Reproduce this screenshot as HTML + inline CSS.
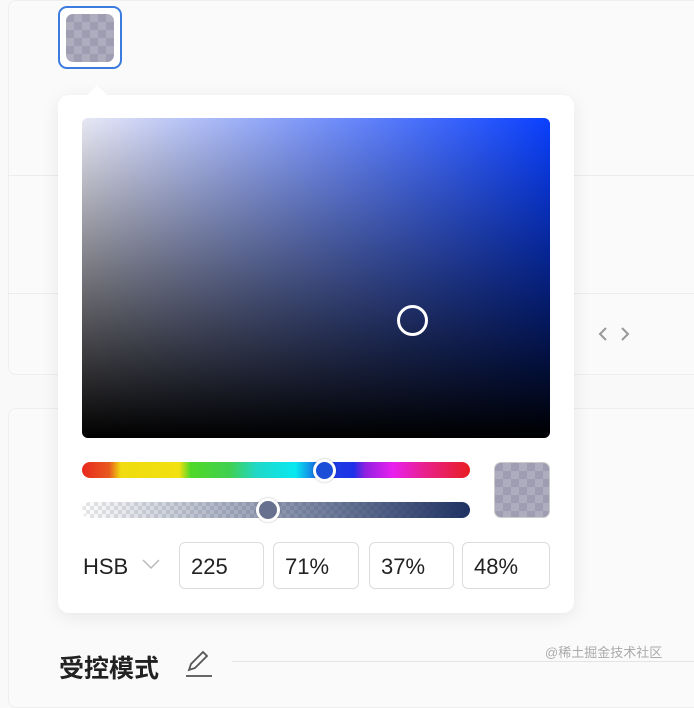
<!DOCTYPE html>
<html><head><meta charset="utf-8"><style>
*{box-sizing:border-box;margin:0;padding:0}
html,body{width:694px;height:678px}
body{background:#f9f9fa;position:relative;overflow:hidden;font-family:"Liberation Sans","Noto Sans CJK SC",sans-serif}
.a{position:absolute}
.chk{background-color:#9f9db1;background-image:linear-gradient(45deg,#aeadbd 25%,transparent 25%,transparent 75%,#aeadbd 75%),linear-gradient(45deg,#aeadbd 25%,transparent 25%,transparent 75%,#aeadbd 75%);background-size:16px 16px;background-position:0 0,8px 8px}
.inp{position:absolute;top:542px;height:47px;border:1.5px solid #dcdcdc;border-radius:6px;background:#fff;font-size:22px;color:#222;padding:11px 0 0 11px}
</style></head><body>
<div class="a" style="left:8px;top:0;width:700px;height:375px;border:1px solid #eeeeef;border-radius:8px;background:#fafafa"></div>
<div class="a" style="left:8px;top:175px;width:700px;height:1px;background:#ececec"></div>
<div class="a" style="left:8px;top:293px;width:700px;height:1px;background:#ececec"></div>
<div class="a" style="left:8px;top:408px;width:700px;height:300px;border:1px solid #eeeeef;border-radius:8px;background:#fafafa"></div>
<svg class="a" style="left:596px;top:325px" width="40" height="18"><path d="M10 3l-6 6 6 6M26 3l6 6-6 6" fill="none" stroke="#999" stroke-width="2"/></svg>
<div class="a" style="left:58px;top:6px;width:64px;height:63px;border:2px solid #3b7be0;border-radius:9px;background:#fff"></div>
<div class="a chk" style="left:66px;top:14px;width:48px;height:48px;border-radius:7px"></div>
<div class="a" style="left:58px;top:95px;width:516px;height:518px;background:#fff;border-radius:11px;box-shadow:0 4px 18px rgba(0,0,0,.08)"></div>
<div class="a" style="left:90px;top:88px;width:14px;height:14px;background:#fff;transform:rotate(45deg)"></div>
<div class="a" style="left:82px;top:118px;width:468px;height:320px;border-radius:6px;background:linear-gradient(to bottom,transparent,#000),linear-gradient(to right,#e8e8f4,#0a40ff)"></div>
<div class="a" style="left:397px;top:305px;width:31px;height:31px;border:3px solid #fff;border-radius:50%"></div>
<div class="a" style="left:82px;top:462px;width:388px;height:16px;border-radius:8px;background:linear-gradient(to right,#e8281e,#e85a1e 7%,#f0dc10 10%,#f2e010 25%,#50d828 28%,#40d050 38%,#20d8c8 45%,#08e8f0 55%,#1e44e0 62%,#1e30e8 70%,#9020e0 73%,#e820f0 80%,#e82090 88%,#e81e20)"></div>
<div class="a" style="left:313px;top:459px;width:23px;height:23px;border-radius:50%;background:#1c4fd8;border:3px solid #fff;box-shadow:0 0 2px rgba(0,0,0,.3)"></div>
<div class="a" style="left:82px;top:502px;width:388px;height:16px;border-radius:8px;background:linear-gradient(to right,rgba(30,50,110,0),#1f3262),repeating-conic-gradient(#e6e6e6 0 25%,#fff 0 50%) 0 0/8px 8px"></div>
<div class="a" style="left:256px;top:498px;width:24px;height:24px;border-radius:50%;background:#67718f;border:3px solid #fff;box-shadow:0 0 2px rgba(0,0,0,.3)"></div>
<div class="a chk" style="left:494px;top:462px;width:56px;height:56px;border-radius:7px;border:1px solid #ccc"></div>
<div class="a" style="left:83px;top:554px;font-size:22px;color:#222">HSB</div>
<svg class="a" style="left:141px;top:557px" width="20" height="14"><path d="M2 3l8 8 8-8" fill="none" stroke="#bbb" stroke-width="1.5"/></svg>
<div class="inp" style="left:179px;width:85px">225</div>
<div class="inp" style="left:273px;width:86px">71%</div>
<div class="inp" style="left:369px;width:85px">37%</div>
<div class="inp" style="left:462px;width:88px">48%</div>
<div class="a" style="left:59px;top:649px;font-size:25px;font-weight:bold;color:#222">受控模式</div>
<svg class="a" style="left:184px;top:648px" width="30" height="30"><path d="M5 22l2-6 12-12 4 4-12 12z" fill="none" stroke="#555" stroke-width="1.8"/><path d="M2 28h26" stroke="#666" stroke-width="2"/></svg>
<div class="a" style="left:232px;top:661px;width:462px;height:1px;background:#e4e4e4"></div>
<div class="a" style="left:545px;top:642px;font-size:13px;color:#aaa">@稀土掘金技术社区</div>
</body></html>
